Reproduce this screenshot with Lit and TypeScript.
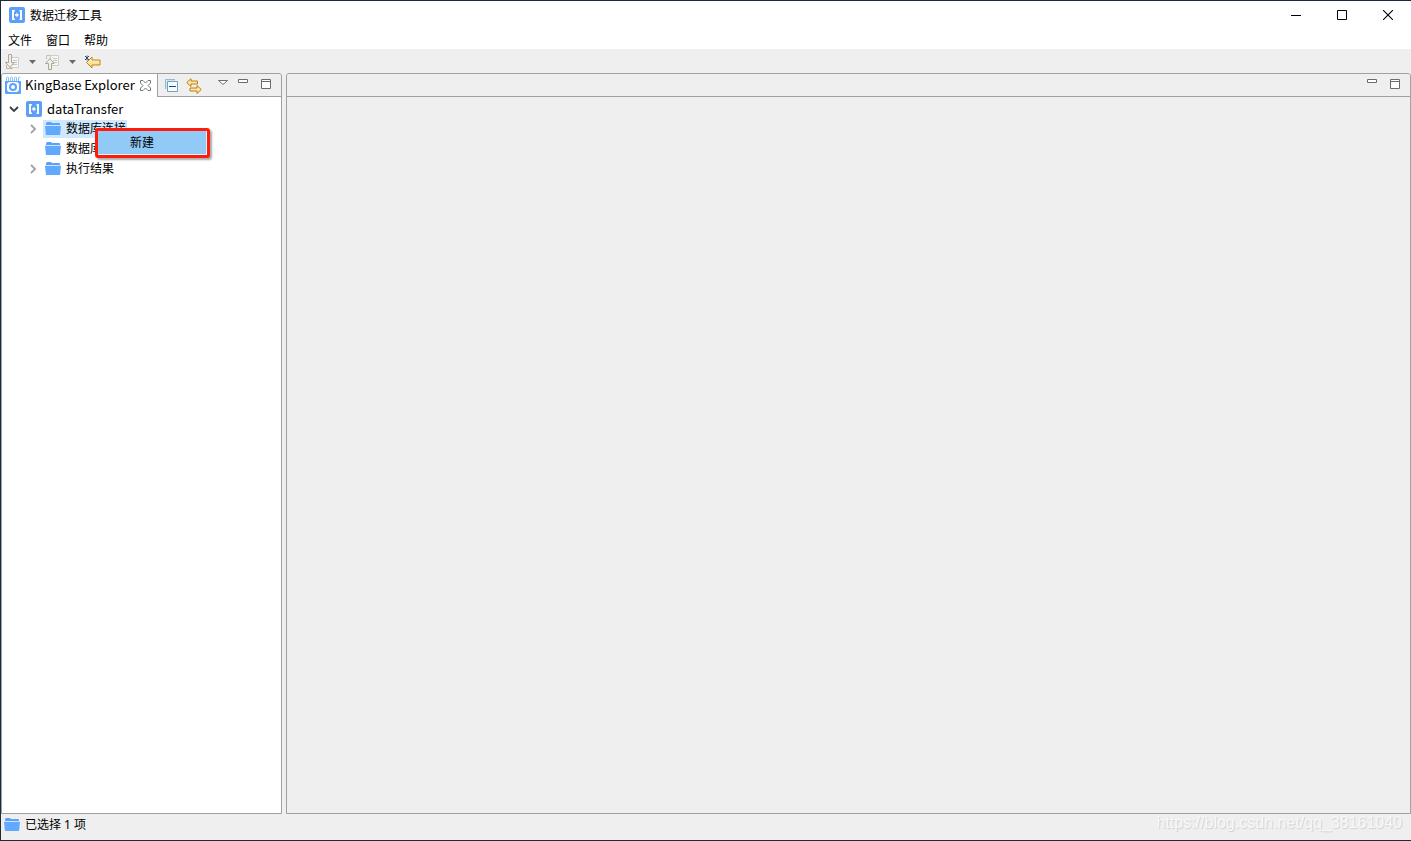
import { LitElement, html, css, svg, nothing } from "lit";
import { customElement, state } from "lit/decorators.js";

const icon = (w: number, h: number, body: unknown) =>
  html`<svg width=${w} height=${h} viewBox="0 0 ${w} ${h}" aria-hidden="true">${body}</svg>`;

const appIcon = () => icon(16, 16, svg`
  <rect width="16" height="16" rx="2" fill="#5b9ff8"/>
  <path d="M3 3h3v1.500H5v7h1V13H3zM13 3h-2.500v1.500H11v7h-0.500V13H13z" fill="#fff"/>
  <path d="M6 7.300h1.500V5.500L10 8 7.500 10.500V8.700H6z" fill="#fff"/>`);

const folderIcon = () => icon(16, 16, svg`<g transform="translate(0 1)">
  <path d="M1 3V1.500Q1 0 2.500 0H6l1 1h7q1 0 1 1v1z" fill="#58a2fb"/>
  <rect y="3" width="16" height="1" fill="#cfe4fe"/>
  <path d="M0 4h16l-1 9H1z" fill="#62a8fc"/></g>`);

const explorerIcon = () => icon(16, 18, svg`
  <path d="M1.500 5V1.500q1-1 2 0V5M5.500 5V1.500q1-1 2 0V5M9.500 5V1.500q1-1 2 0V5M13.500 5V1.500q1-1 2 0" fill="none" stroke="#8bbffc"/>
  <path d="M0 5h16v12q0 1-1 1H1q-1 0-1-1z" fill="#5ba3fb"/>
  <rect x="2" y="6" width="12" height="10" rx="3" fill="#fff"/>
  <circle cx="8" cy="11" r="3" fill="none" stroke="#5ba3fb" stroke-width="2"/>`);

const page = svg`<path d="M5.500 3.500h8v10h-8z" fill="#f6f6f3" stroke="#d0cfc5"/>
  <path d="M8 6.500h4M8 8.500h4M8 10.500h4" stroke="#c0c5ca"/>`;
const nextNoteIcon = () => icon(15, 16, svg`${page}
  <path d="M3.500 0.500h3v8h2.500L5 13.500 0.500 8.500h3z" fill="#f1efe8" stroke="#aaa69b"/>
  <path d="M1.500 11v3.500h6" fill="none" stroke="#b8b5aa"/>`);
const prevNoteIcon = () => icon(15, 16, svg`
  <g transform="translate(0 -2)">${page}</g>
  <path d="M3.500 15.500h3v-6h2.500L5 4.500 0.500 9.500h3z" fill="#f1efe8" stroke="#aaa69b"/>
  <path d="M1.500 5V1.500h4" fill="none" stroke="#c3c2b8"/>`);
const lastEditIcon = () => icon(16, 14, svg`
  <defs><linearGradient id="g" x2="0" y2="1"><stop stop-color="#fffbe0"/><stop offset="1" stop-color="#f5cf62"/></linearGradient></defs>
  <path d="M1.500 7.500L7 2v3h8v5H7v3z" fill="url(#g)" stroke="#bf851a"/>
  <path d="M2 0.500v5M0 1l4 4M4 1L0 5" stroke="#294f7f"/>`);
const dropIcon = () => icon(7, 4, svg`<path d="M0 0h7L3.500 4z" fill="#6b6b6b"/>`);

const closeTabIcon = () => icon(11, 11, svg`
  <path d="M0.500 0.500h2.500l2.500 2.500 2.500-2.500h2.500v2.500L8 5.500 10.500 8v2.500H8L5.500 8 3 10.500H0.500V8L3 5.500 0.500 3z" fill="#fff" stroke="#777"/>`);
const collapseIcon = () => icon(13, 13, svg`
  <path d="M0.500 10V0.500H10" fill="none" stroke="#8dbdd0"/>
  <path d="M1 1h9v2H3v7H1z" fill="#cde7f2"/>
  <path d="M2.500 2.500h10v10h-10z" fill="#f5fbff" stroke="#7aa0c4"/>
  <path d="M4 7.500h7" stroke="#0b4a8b"/>`);
const linkIcon = () => icon(16, 16, svg`
  <path d="M0.700 4.500L5 0.700V3h6.500v3H5v2.500z" fill="#fbe7a4" stroke="#c17f14"/>
  <path d="M15.300 11.500L11 7.500v2.500H4v3h7v2.500z" fill="#fbe7a4" stroke="#c17f14"/>`);
const viewMenuIcon = () => icon(10, 6, svg`<path d="M0.500 1.500h9L5 5.500z" fill="#fff" stroke="#6c6c6c"/>`);
const minimizeIcon = () => icon(10, 4, svg`<path d="M0.500 0.500h9v3h-9z" fill="#fff" stroke="#6c6c6c"/>`);
const maximizeIcon = () => icon(10, 10, svg`<path d="M0.500 0.500h9v9h-9zM0 2.500h10" fill="#fff" stroke="#6c6c6c"/>`);

interface Node { id: string; label: string; expandable: boolean; }

@customElement("app-root")
export class AppRoot extends LitElement {
  @state() private open = true;
  @state() private selected = "conn";

  private nodes: Node[] = [
    { id: "conn", label: "数据库连接", expandable: true },
    { id: "move", label: "数据库迁移", expandable: false },
    { id: "result", label: "执行结果", expandable: true },
  ];

  static styles = css`
    :host {
      display: flex; flex-direction: column; box-sizing: border-box; min-height: 100vh;
      border: solid #1c2b3c; border-width: 1px 0 1px 1px; background: #efefef; color: #000;
      font: 12px/20px "Noto Sans", "Noto Sans CJK SC", sans-serif;
      position: relative;
    }
    * { box-sizing: border-box; }
    svg { display: block; flex: none; }
    button { font: inherit; color: inherit; background: none; border: 0; padding: 0; display: flex; align-items: center; }
    .title { display: flex; align-items: center; height: 28px; padding-left: 8px; background: #fff; }
    .name { flex: 1; margin: 0 0 0 5px; font-size: 12px; line-height: 20px; padding-top: 2px; font-weight: 400; }
    .win { width: 46px; height: 28px; justify-content: center; }
    .menus { display: flex; gap: 14px; height: 20px; padding: 4px 0 0 7px; background: #fff; line-height: 16px; }
    .tools { display: flex; align-items: center; height: 24px; padding: 2px 0 0 4px; }
    .tool { height: 22px; }
    .drop { width: 25px; height: 22px; justify-content: center; }
    .body { flex: 1; display: flex; gap: 4px; }
    .panel { border: 1px solid #a0a0a0; border-radius: 3px 3px 0 0; display: flex; flex-direction: column; }
    .explorer { width: 281px; background: #fff; }
    .editor { flex: 1; }
    .bar { height: 23px; display: flex; border-bottom: 1px solid #a0a0a0; background: #efefef; border-radius: 3px 3px 0 0; }
    .tab { display: flex; align-items: center; width: 156px; height: 23px; gap: 4px; padding: 0 6px 1px 3px; background: #fff; border-right: 1px solid #a0a0a0; border-radius: 3px 0 0 0; }
    .latin { font: 13px/20px "Noto Sans CJK SC", sans-serif; }
    .tab .latin { flex: 1; white-space: nowrap; }
    .acts { flex: 1; display: flex; justify-content: space-between; align-items: center; padding: 0 10px 2px 7px; }
    .pair { display: flex; align-items: center; gap: 8px; padding-top: 3px; }
    .trio, .duo { display: flex; gap: 13px; align-items: flex-start; }
    .duo { gap: 10px; }
    .editor .acts { justify-content: flex-end; }
    .tree, .kids { list-style: none; margin: 0; padding: 0; }
    .tree { padding-top: 2px; }
    .row { display: flex; align-items: center; height: 20px; padding-left: 5px; }
    .kids .row { padding-left: 24px; }
    .twist { width: 14px; height: 20px; justify-content: center; }
    .item { gap: 5px; height: 18px; padding: 0 1px 0 2px; margin-left: 3px; }
    .on { background: #cde8ff; }
    .status { display: flex; align-items: center; gap: 5px; height: 26px; padding: 0 9px 5px 3px; }
    .count { flex: 1; }
    .mark { font: 16px/18px "Liberation Sans", sans-serif; color: #f8f8f8; text-shadow: 1px 1px 1px #cfcfcf; padding-bottom: 3px; }
    .context {
      position: absolute; left: 94px; top: 127px; width: 115px; height: 30px; padding: 0 1px 1px 0;
      border: 3px solid #fe1d0d; border-radius: 3px; background: #f3f3f3; box-shadow: 2px 2px 2px #0005;
    }
    .new { width: 100%; height: 100%; background: #91c9f7; padding-left: 32px; }
  `;

  private twist(down: boolean) {
    return icon(10, 10, down
      ? svg`<path d="M1 3l4 4 4-4" fill="none" stroke="#3c3c3c" stroke-width="1.800"/>`
      : svg`<path d="M3 1l4 4-4 4" fill="none" stroke="#a2a2a2" stroke-width="1.800"/>`);
  }

  render() {
    return html`
      <header class="title">
        ${appIcon()}
        <h1 class="name">数据迁移工具</h1>
        <button class="win" aria-label="最小化">${icon(10, 10, svg`<path d="M0 5.500h10" stroke="#000"/>`)}</button>
        <button class="win" aria-label="最大化">${icon(10, 10, svg`<path d="M0.500 0.500h9v9h-9z" fill="none" stroke="#000"/>`)}</button>
        <button class="win" aria-label="关闭">${icon(10, 10, svg`<path d="M0 0l10 10M10 0l-10 10" stroke="#000" stroke-width="1.100"/>`)}</button>
      </header>
      <nav class="menus">
        ${["文件", "窗口", "帮助"].map((m) => html`<button>${m}</button>`)}
      </nav>
      <div class="tools" role="toolbar">
        <button class="tool" aria-label="下一个注释">${nextNoteIcon()}</button>
        <button class="drop" aria-label="下一个注释选项">${dropIcon()}</button>
        <button class="tool" aria-label="上一个注释">${prevNoteIcon()}</button>
        <button class="drop" aria-label="上一个注释选项">${dropIcon()}</button>
        <button class="tool" aria-label="上次编辑位置">${lastEditIcon()}</button>
      </div>
      <main class="body">
        <section class="panel explorer">
          <div class="bar">
            <div class="tab">
              ${explorerIcon()}<span class="latin">KingBase Explorer</span>
              <button class="close" aria-label="关闭视图">${closeTabIcon()}</button>
            </div>
            <div class="acts">
              <div class="pair">
                <button aria-label="全部折叠" @click=${() => (this.open = false)}>${collapseIcon()}</button>
                <button aria-label="与编辑器链接">${linkIcon()}</button>
              </div>
              <div class="trio">
                <div class="duo">
                  <button aria-label="视图菜单">${viewMenuIcon()}</button>
                  <button aria-label="最小化视图">${minimizeIcon()}</button>
                </div>
                <button aria-label="最大化视图">${maximizeIcon()}</button>
              </div>
            </div>
          </div>
          <ul class="tree">
            <li>
              <div class="row">
                <button class="twist" aria-label="展开" @click=${() => (this.open = !this.open)}>${this.twist(this.open)}</button>
                <button class="item latin">${appIcon()}dataTransfer</button>
              </div>
              ${this.open ? html`<ul class="kids">
                ${this.nodes.map((n) => html`<li class="row">
                  ${n.expandable ? html`<button class="twist" aria-label="展开">${this.twist(false)}</button>` : html`<span class="twist"></span>`}
                  <button class="item ${n.id === this.selected ? "on" : ""}" @click=${() => (this.selected = n.id)}>${folderIcon()}${n.label}</button>
                </li>`)}
              </ul>` : nothing}
            </li>
          </ul>
        </section>
        <section class="panel editor">
          <div class="bar">
            <div class="acts">
              <div class="trio">
                <button aria-label="最小化编辑器">${minimizeIcon()}</button>
                <button aria-label="最大化编辑器">${maximizeIcon()}</button>
              </div>
            </div>
          </div>
        </section>
      </main>
      <footer class="status">
        ${folderIcon()}<span class="count">已选择 1 项</span>
        <span class="mark">https://blog.csdn.net/qq_38161040</span>
      </footer>
      <div class="context" role="menu">
        <button class="new" role="menuitem">新建</button>
      </div>
    `;
  }
}
